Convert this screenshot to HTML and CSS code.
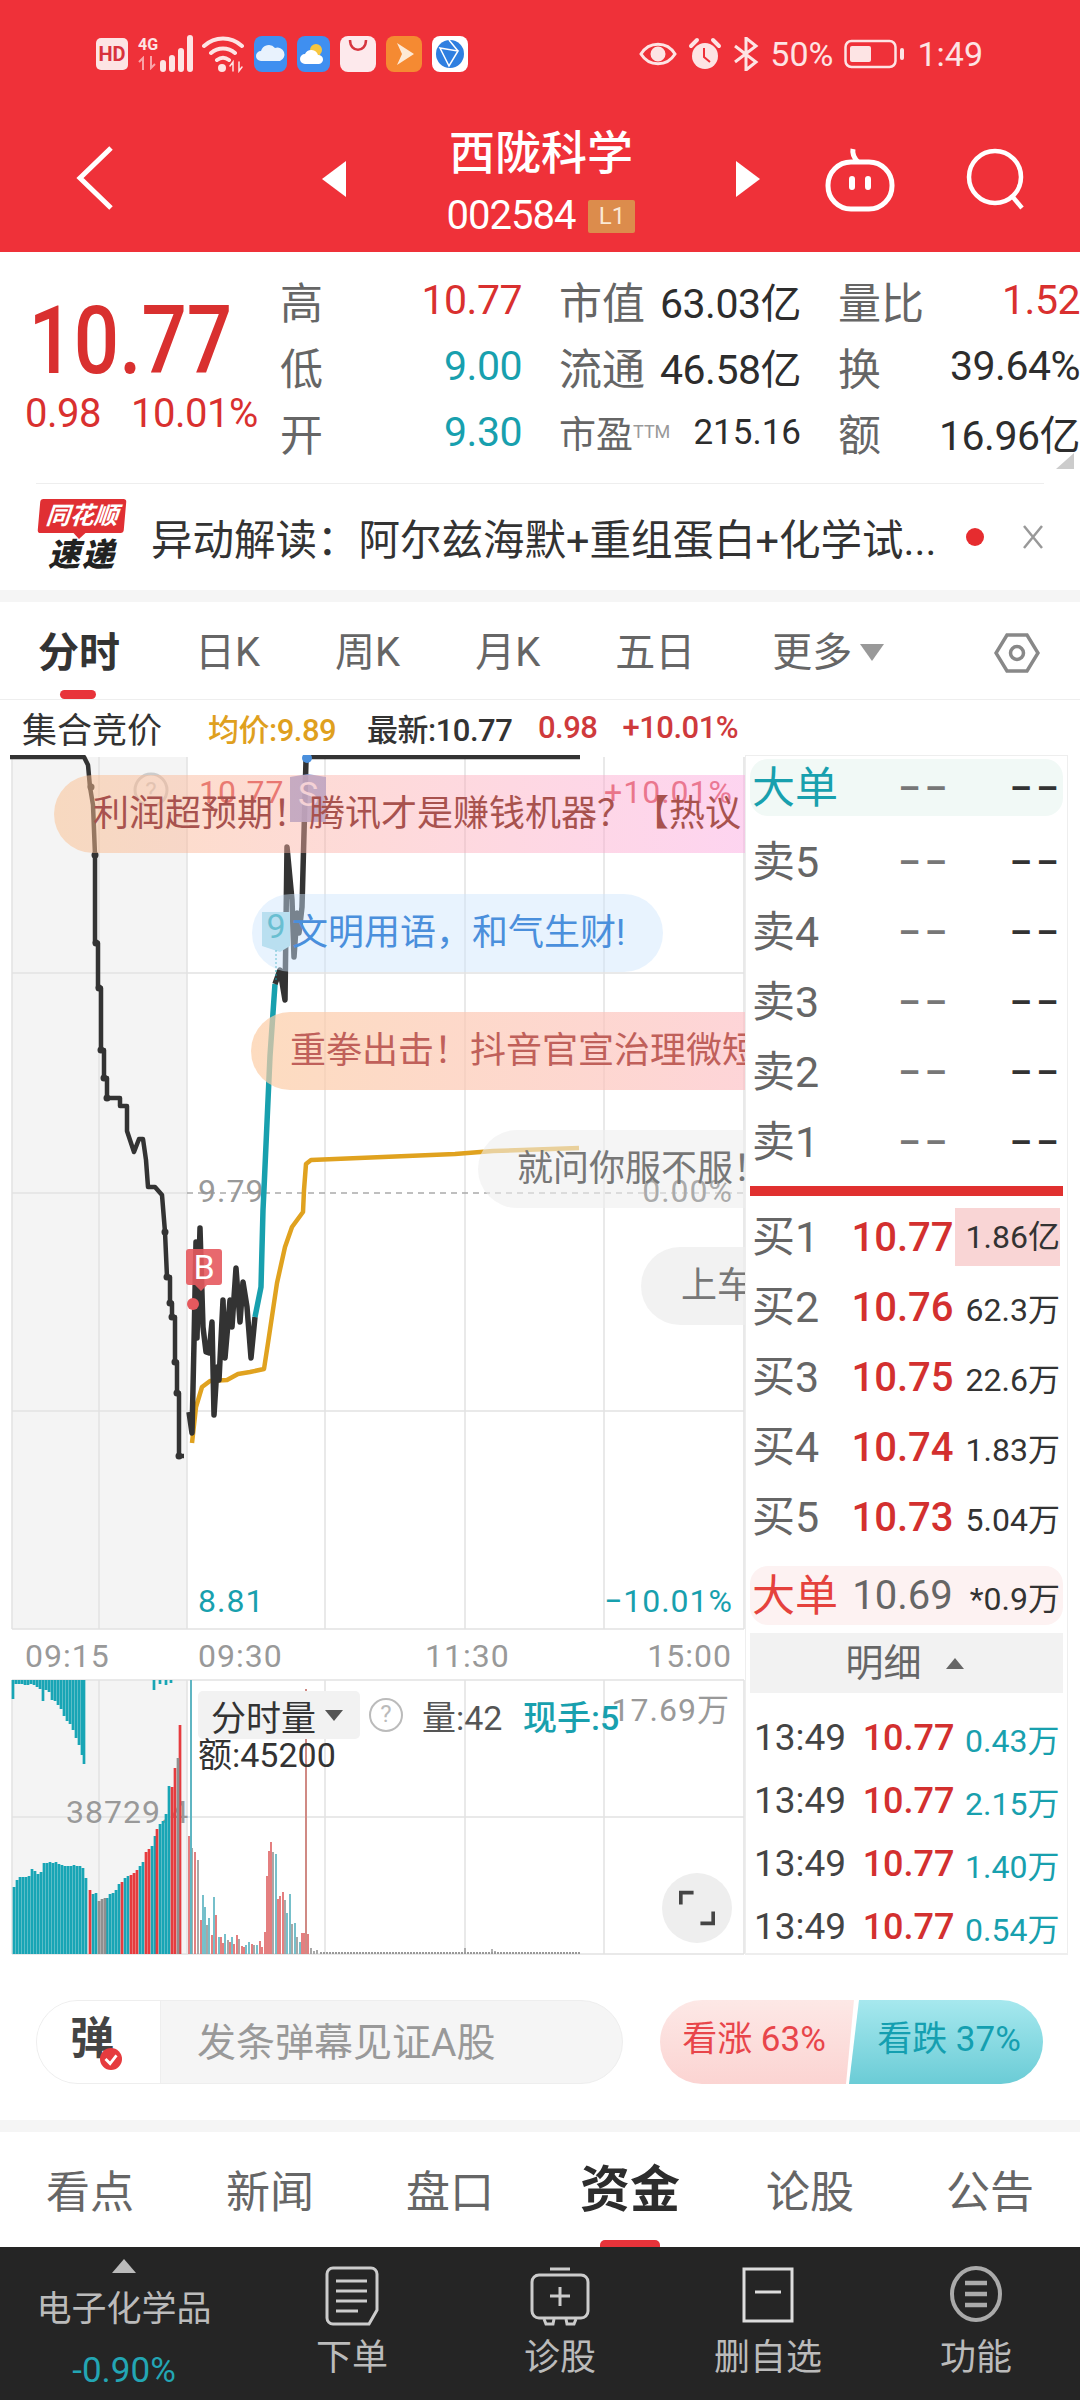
FILE: index.html
```html
<!DOCTYPE html>
<html lang="zh-CN">
<head>
    <meta charset="UTF-8">
    <meta name="viewport" content="width=device-width, initial-scale=1.0">
    <title>西陇科学</title>
    <link rel="stylesheet" href="styles.css">
</head>
<body>
    <header class="top">
        <div class="status">
            <div class="status-left">
                <span class="hd">HD</span>
                <span class="net">4G<svg class="net-arrows" width="20" height="14" viewBox="0 0 20 14" fill="none" stroke="#f9a3a8" stroke-width="2"><path d="M5 14V2L1 6M13 0v12l4-4"/></svg></span>
                <svg class="signal" width="38" height="38" viewBox="0 0 38 38"><path d="M3 34v-6M12 34v-11M21 34v-18M30 34V3" stroke="#fde4e4" stroke-width="6" stroke-linecap="round" fill="none"/></svg>
                <svg class="wifi" width="42" height="38" viewBox="0 0 42 38" fill="none" stroke="#fde4e4" stroke-width="4" stroke-linecap="round"><path d="M2 11C13 1 29 1 40 11M9 18c7-6 17-6 24 0M15 25c4-3 8-3 12 0"/><circle cx="20" cy="33" r="4" fill="#fde4e4" stroke="none"/><path d="M31 36v-9l-3 4M37 27v9l3-4" stroke-width="1.500"/></svg>
                <svg class="app" width="33" height="36" viewBox="0 0 33 36"><rect width="33" height="36" rx="8" fill="#3f8ff0"/><path d="M7 25a5 5 0 0 1 0-10 8 8 0 0 1 14-3 6.500 6.500 0 0 1 5 13z" fill="#e8f2fd"/></svg>
                <svg class="app" width="33" height="36" viewBox="0 0 33 36"><rect width="33" height="36" rx="8" fill="#3f8ff0"/><circle cx="19" cy="14" r="6" fill="#f7c640"/><path d="M8 28a5 5 0 0 1 0-10 7 7 0 0 1 13 1 4.500 4.500 0 0 1 1 9z" fill="#fff"/></svg>
                <svg class="app" width="36" height="36" viewBox="0 0 36 36"><rect width="36" height="36" rx="8" fill="#fde9ec"/><path d="M10 4c0 13 16 13 16 0" fill="none" stroke="#d6353f" stroke-width="2.500"/></svg>
                <svg class="app" width="36" height="36" viewBox="0 0 36 36"><rect width="36" height="36" rx="8" fill="#f58a32"/><path d="M11 7l17 11-17 11 5-11z" fill="#fde9d5"/></svg>
                <svg class="app" width="36" height="36" viewBox="0 0 36 36"><rect width="36" height="36" rx="8" fill="#fff"/><circle cx="18" cy="18" r="14" fill="#2f7fe0"/><path d="M8 12l18 3-9 15zM17 4l9 11" fill="none" stroke="#fff" stroke-width="1.500"/></svg>
            </div>
            <div class="status-right">
                <svg width="38" height="26" viewBox="0 0 38 26" fill="none" stroke="#fde4e4" stroke-width="3"><path d="M2 13C10 0 28 0 36 13 28 26 10 26 2 13z"/><circle cx="19" cy="13" r="6" fill="#fde4e4"/></svg>
                <svg width="34" height="34" viewBox="0 0 34 34"><circle cx="17" cy="19" r="13" fill="#fde4e4"/><path d="M16 11v9l6 5" fill="none" stroke="#ef3139" stroke-width="2"/><path d="M3 9l6-6M31 9l-6-6" stroke="#fde4e4" stroke-width="4" stroke-linecap="round"/></svg>
                <svg width="26" height="34" viewBox="0 0 26 34" fill="none" stroke="#fde4e4" stroke-width="3"><path d="M2 9l21 16-10 8V1l10 8L2 25"/></svg>
                <span class="pct">50%</span>
                <svg width="62" height="30" viewBox="0 0 62 30"><rect x="1.500" y="2" width="50" height="26" rx="6" fill="none" stroke="#fde4e4" stroke-width="2.500"/><rect x="6" y="7" width="21" height="16" rx="2" fill="#fde4e4"/><rect x="56" y="9" width="4" height="12" rx="2" fill="#fde4e4"/></svg>
                <span class="clock">1:49</span>
            </div>
        </div>
        <div class="nav">
            <svg class="nav-back" width="38" height="64" viewBox="0 0 38 64" fill="none" stroke="#fff" stroke-width="5"><path d="M35 2L4 32l31 30"/></svg>
            <span class="tri-left"></span>
            <div class="nav-title">
                <div class="stock-name">西陇科学</div>
                <div class="stock-code">002584<span class="level">L1</span></div>
            </div>
            <span class="tri-right"></span>
            <svg class="nav-robot" width="70" height="66" viewBox="0 0 70 66" fill="none" stroke="#fff" stroke-width="5"><path d="M33 16C29 12 27 8 28 3"/><rect x="3" y="16" width="64" height="47" rx="23"/><path d="M27 33v8M43 33v8" stroke-linecap="round" stroke-width="6"/></svg>
            <svg class="nav-search" width="62" height="62" viewBox="0 0 62 62" fill="none" stroke="#fff" stroke-width="4.500"><circle cx="29" cy="29" r="26"/><path d="M46 48l10 12"/></svg>
        </div>
    </header>

    <section class="quote">
        <div class="price-box">
            <div class="price">10.77</div>
            <div class="change"><span>0.98</span><span>10.01%</span></div>
        </div>
        <div class="stat-col col-a">
            <div class="stat"><span class="stat-name">高</span><span class="up">10.77</span></div>
            <div class="stat"><span class="stat-name">低</span><span class="down">9.00</span></div>
            <div class="stat"><span class="stat-name">开</span><span class="down">9.30</span></div>
        </div>
        <div class="stat-col col-b">
            <div class="stat"><span class="stat-name">市值</span><span class="dark">63.03亿</span></div>
            <div class="stat"><span class="stat-name">流通</span><span class="dark">46.58亿</span></div>
            <div class="stat"><span class="stat-name small">市盈<sup class="ttm">TTM</sup></span><span class="dark mid">215.16</span></div>
        </div>
        <div class="stat-col col-c">
            <div class="stat"><span class="stat-name">量比</span><span class="up">1.52</span></div>
            <div class="stat"><span class="stat-name">换</span><span class="dark">39.64%</span></div>
            <div class="stat"><span class="stat-name">额</span><span class="dark">16.96亿</span></div>
        </div>
        <span class="corner"></span>
    </section>

    <section class="news">
        <div class="news-logo">
            <span class="logo-top">同花顺</span>
            <span class="logo-bottom">速递</span>
        </div>
        <div class="news-text">异动解读：阿尔兹海默+重组蛋白+化学试...</div>
        <span class="news-dot"></span>
        <svg width="22" height="26" viewBox="0 0 22 26" stroke="#999" stroke-width="2.500"><path d="M2 2l18 22M20 2L2 24"/></svg>
    </section>

    <nav class="periods">
        <span class="period active">分时</span>
        <span class="period">日K</span>
        <span class="period">周K</span>
        <span class="period">月K</span>
        <span class="period">五日</span>
        <span class="period more">更多<i class="more-tri"></i></span>
        <svg class="hex" width="46" height="46" viewBox="0 0 46 46" fill="none" stroke="#888" stroke-width="3.500"><path d="M13 5h20l11 18-11 18H13L2 23z"/><circle cx="23" cy="23" r="6.500"/></svg>
    </nav>

    <div class="legend">
        <span class="legend-title">集合竞价</span>
        <span class="legend-avg">均价:9.89</span>
        <span class="legend-last">最新:10.77</span>
        <span class="legend-up">0.98</span>
        <span class="legend-up">+10.01%</span>
    </div>

    <div class="market">
        <div class="chart">
            <svg class="chart-svg" width="745" height="1200" viewBox="0 755 745 1200">
                <rect x="12" y="757" width="175" height="872" fill="#f4f4f4"/>
                <rect x="12" y="1680" width="175" height="274" fill="#f4f4f4"/>

                <g stroke="#e2e2e2" stroke-width="1.500" fill="none">
                    <path d="M12 757V1629M99 757V1629M187 757V1629M325 757V1629M465 757V1629M604 757V1629M744 757V1629"/>
                    <path d="M12 973H744M12 1193H187M12 1411H744M12 1629H744"/>
                    <path d="M12 1680V1954M99 1680V1954M187 1680V1954M325 1680V1954M465 1680V1954M604 1680V1954M744 1680V1954"/>
                    <path d="M12 1680H744M12 1817H744M12 1954H744"/>
                </g>
                <path d="M187 1193H744" stroke="#aaa" stroke-width="1.500" stroke-dasharray="6 5"/>

                <!-- labels under the danmaku -->
                <g class="chart-label">
                    <text x="199" y="803" fill="#d9484d">10.77</text>
                    <text x="733" y="803" fill="#d9484d" text-anchor="end">+10.01%</text>
                    <text x="198" y="1202" fill="#999">9.79</text>
                    <text x="733" y="1202" fill="#444" text-anchor="end">0.00%</text>
                    <text x="198" y="1612" fill="#18a0ae">8.81</text>
                    <text x="733" y="1612" fill="#18a0ae" text-anchor="end">−10.01%</text>
                    <text x="25" y="1667" fill="#999">09:15</text>
                    <text x="198" y="1667" fill="#999">09:30</text>
                    <text x="425" y="1667" fill="#999">11:30</text>
                    <text x="732" y="1667" fill="#999" text-anchor="end">15:00</text>
                    <text x="66" y="1823" fill="#999">38729.4</text>
                    <text x="730" y="1721" fill="#999" text-anchor="end">17.69万</text>
                </g>
                <circle cx="151" cy="790" r="16" fill="none" stroke="#ccc" stroke-width="3"/>
                <text class="qmark" x="151" y="799" text-anchor="middle" fill="#ccc">?</text>

                <!-- volume, pre-market hanging -->
                <path stroke="#18a5b5" stroke-width="2.700" fill="none" d="M13 1680v19M16 1680v4M19 1680v4M22 1680v4M25 1680v5M28 1680v5M31 1680v4M34 1680v5M37 1680v7M40 1680v9M43 1680v21M46 1680v10M49 1680v12M52 1680v20M55 1680v21M58 1680v25M61 1680v29M64 1680v36M67 1680v41M70 1680v44M73 1680v50M76 1680v58M79 1680v65M82 1680v75M84 1680v84M154 1680v10M160 1680v4M166 1680v5M171 1680v3"/>
                <!-- volume, pre-market -->
                <path stroke="#18a5b5" stroke-width="2.700" fill="none" d="M14 1954v-67M17 1954v-74M20 1954v-77M23 1954v-77M26 1954v-77M29 1954v-78M32 1954v-85M35 1954v-83M38 1954v-80M41 1954v-82M44 1954v-91M47 1954v-91M50 1954v-92M53 1954v-91M56 1954v-92M59 1954v-90M62 1954v-89M65 1954v-88M68 1954v-88M71 1954v-88M74 1954v-89M77 1954v-88M80 1954v-88M83 1954v-86M86 1954v-76M93 1954v-60M96 1954v-61M107 1954v-56M110 1954v-60M113 1954v-61M116 1954v-64M119 1954v-70M125 1954v-76M128 1954v-78M140 1954v-88M143 1954v-92M152 1954v-108M155 1954v-118M160 1954v-130M163 1954v-133M166 1954v-140M169 1954v-168"/>
                <path stroke="#e63b3e" stroke-width="2.700" fill="none" d="M90 1954v-64M122 1954v-72M131 1954v-79M134 1954v-81M137 1954v-84M146 1954v-102M149 1954v-105M157 1954v-125M172 1954v-167M175 1954v-186M180 1954v-229"/>
                <path stroke="#8f8f8f" stroke-width="2.700" fill="none" d="M99 1954v-53M102 1954v-55M105 1954v-56M178 1954v-196"/>
                <!-- volume, day session -->
                <path stroke="#e0696a" stroke-width="1.700" fill="none" d="M189 1954v-118M195 1954v-102M201 1954v-34M212 1954v-19M216 1954v-39M221 1954v-17M223 1954v-11M230 1954v-12M234 1954v-10M237 1954v-19M242 1954v-8M244 1954v-7M252 1954v-10M260 1954v-13M262 1954v-7M265 1954v-22M267 1954v-78M269 1954v-103M271 1954v-112M278 1954v-55M280 1954v-58M283 1954v-62M302 1954v-21M304 1954v-21M306 1954v-21M308 1954v-20"/>
                <path stroke="#999" stroke-width="1.700" fill="none" d="M192 1954v-106M198 1954v-94M207 1954v-29M228 1954v-14M239 1954v-15M254 1954v-9M273 1954v-102M285 1954v-54M292 1954v-30M297 1954v-17M311 1954v-6M314 1954v-3M317 1954v-4"/>
                <path stroke="#5fb5c2" stroke-width="1.700" fill="none" d="M203 1954v-59M205 1954v-47M209 1954v-36M214 1954v-57M219 1954v-17M225 1954v-20M232 1954v-17M246 1954v-9M249 1954v-12M257 1954v-9M276 1954v-100M287 1954v-41M290 1954v-60M295 1954v-31M300 1954v-12"/>
                <path d="M320 1953H580" stroke="#999" stroke-width="2" stroke-dasharray="2 1"/>
                <path d="M465 1954v-6M492 1954v-5M495 1954v-3" stroke="#999" stroke-width="1.500"/>
                <path d="M191 1680v274" stroke="#5fb5c2" stroke-width="2"/>
                <path d="M306 1689v265" stroke="#d08a84" stroke-width="2"/>

                <!-- price lines -->
                <path fill="none" stroke="#333" stroke-width="4.500" stroke-linejoin="round" d="M10 757H84L88 765 90 787 93 805 95 855V943H98V988H101V1050H104V1078H107V1098H120V1106H127V1131L131 1143 134 1152 139 1139H143L146 1160 148 1187H155L162 1195 165 1232 167 1277H170V1303H172V1317H175V1362H177V1393H179V1456H184"/>
                <g fill="#333">
                    <circle cx="91" cy="787" r="3.500"/><circle cx="95" cy="855" r="3.500"/><circle cx="96" cy="943" r="3.500"/><circle cx="99" cy="988" r="3.500"/><circle cx="101" cy="1050" r="3.500"/><circle cx="104" cy="1078" r="3.500"/><circle cx="107" cy="1098" r="3.500"/><circle cx="165" cy="1232" r="3.500"/><circle cx="167" cy="1277" r="3.500"/><circle cx="170" cy="1303" r="3.500"/><circle cx="172" cy="1317" r="3.500"/><circle cx="175" cy="1362" r="3.500"/><circle cx="177" cy="1393" r="3.500"/><circle cx="179" cy="1456" r="3.500"/>
                </g>
                <path fill="none" stroke="#e0a21f" stroke-width="4.500" stroke-linejoin="round" d="M192 1443L196 1407 202 1387 210 1381 227 1380 238 1374 250 1372 264 1369 268 1343 277 1283 285 1247 292 1227 303 1212 304 1190 306 1164 311 1160 383 1157 455 1154 493 1151 579 1148"/>
                <path fill="none" stroke="#333" stroke-width="5.500" stroke-linejoin="round" d="M189 1412L192 1433 194 1343 196 1242 197 1338 200 1228 203 1327 206 1352 209 1353 212 1322 214 1415 217 1367 219 1380 223 1300 225 1358 230 1300 232 1327 236 1268 240 1322 243 1282 247 1307 251 1358 255 1317"/>
                <path fill="none" stroke="#18a0ae" stroke-width="5.500" stroke-linejoin="round" d="M255 1317L261 1287 263 1210 264 1189 270 1056 275 984"/>
                <path fill="none" stroke="#333" stroke-width="5.500" stroke-linejoin="round" d="M275 984L280 970 285 1000 287 847 292 900 294 957 297 913 299 933 302 907 306 760"/>
                <path d="M306 757H580" stroke="#333" stroke-width="4.500"/>
                <circle cx="307" cy="758" r="5" fill="#4a8fdc"/>

                <!-- trade markers -->
                <path d="M186 1252a3 3 0 0 1 3-3h30a3 3 0 0 1 3 3v30a3 3 0 0 1-3 3h-12l-6 6-6-6h-6a3 3 0 0 1-3-3z" fill="#e5595e" fill-opacity=".9"/>
                <text class="marker-text" x="204" y="1279" text-anchor="middle" fill="#fff">B</text>
                <circle cx="193" cy="1304" r="6" fill="#e5595e"/>
                <path d="M290 777l18-3 18 3v45h-36z" fill="#8f9dd8" fill-opacity=".9"/>
                <text class="marker-text" x="308" y="806" text-anchor="middle" fill="#eef">S</text>
                <path d="M262 912h28v34l-10 6-18-6z" fill="#a9dbe6"/>
                <text class="marker-text" x="276" y="938" text-anchor="middle" fill="#18a0ae">9</text>
                <path d="M276 950v30" stroke="#18a0ae" stroke-dasharray="2 2"/>
            </svg>

            <!-- danmaku -->
            <div class="danmu danmu-a">利润超预期！腾讯才是赚钱机器？【热议</div>
            <div class="danmu danmu-b">文明用语，和气生财!</div>
            <div class="danmu danmu-c">重拳出击！抖音官宣治理微短</div>
            <div class="danmu danmu-d">就问你服不服！</div>
            <div class="danmu danmu-e">上车</div>

            <div class="vol-bar">
                <span class="vol-select">分时量<i class="vol-tri"></i></span>
                <span class="vol-help">?</span>
                <span class="vol-amount">量:42</span>
                <span class="vol-hand">现手:5</span>
            </div>
            <div class="vol-money">额:45200</div>
            <div class="expand">
                <svg width="42" height="42" viewBox="0 0 42 42" fill="none" stroke="#444" stroke-width="4.500"><path d="M2 17V3h15M40 25v14H25"/></svg>
            </div>
        </div>

        <aside class="orders">
            <div class="big-row sell-big">
                <span class="order-name teal">大单</span>
                <span class="dash grey">––</span>
                <span class="dash">––</span>
            </div>
            <div class="order-row"><span class="order-name">卖5</span><span class="dash grey">––</span><span class="dash">––</span></div>
            <div class="order-row"><span class="order-name">卖4</span><span class="dash grey">––</span><span class="dash">––</span></div>
            <div class="order-row"><span class="order-name">卖3</span><span class="dash grey">––</span><span class="dash">––</span></div>
            <div class="order-row"><span class="order-name">卖2</span><span class="dash grey">––</span><span class="dash">––</span></div>
            <div class="order-row"><span class="order-name">卖1</span><span class="dash grey">––</span><span class="dash">––</span></div>
            <div class="order-split"></div>
            <div class="order-row"><span class="order-name">买1</span><span class="order-price">10.77</span><span class="order-vol first">1.86亿</span></div>
            <div class="order-row"><span class="order-name">买2</span><span class="order-price">10.76</span><span class="order-vol">62.3万</span></div>
            <div class="order-row"><span class="order-name">买3</span><span class="order-price">10.75</span><span class="order-vol">22.6万</span></div>
            <div class="order-row"><span class="order-name">买4</span><span class="order-price">10.74</span><span class="order-vol">1.83万</span></div>
            <div class="order-row"><span class="order-name">买5</span><span class="order-price">10.73</span><span class="order-vol">5.04万</span></div>
            <div class="big-row buy-big">
                <span class="order-name red">大单</span>
                <span class="order-price grey">10.69</span>
                <span class="order-vol">*0.9万</span>
            </div>
            <div class="detail-head">明细<i class="detail-tri"></i></div>
            <div class="tick"><span class="tick-time">13:49</span><span class="tick-price">10.77</span><span class="tick-vol">0.43万</span></div>
            <div class="tick"><span class="tick-time">13:49</span><span class="tick-price">10.77</span><span class="tick-vol">2.15万</span></div>
            <div class="tick"><span class="tick-time">13:49</span><span class="tick-price">10.77</span><span class="tick-vol">1.40万</span></div>
            <div class="tick"><span class="tick-time">13:49</span><span class="tick-price">10.77</span><span class="tick-vol">0.54万</span></div>
        </aside>
    </div>

    <div class="comment-bar">
        <div class="comment-input">
            <span class="comment-mark">弹<svg class="comment-check" width="24" height="24" viewBox="0 0 24 24"><circle cx="12" cy="12" r="12" fill="#e63b3e"/><path d="M6 12l5 5 7-9" fill="none" stroke="#fff" stroke-width="3"/></svg></span>
            <span class="comment-hint">发条弹幕见证A股</span>
        </div>
        <div class="vote">
            <span class="vote-up">看涨 63%</span>
            <span class="vote-down">看跌 37%</span>
        </div>
    </div>

    <nav class="sections">
        <span class="section">看点</span>
        <span class="section">新闻</span>
        <span class="section">盘口</span>
        <span class="section active">资金</span>
        <span class="section">论股</span>
        <span class="section">公告</span>
    </nav>

    <footer class="toolbar">
        <div class="sector">
            <i class="sector-tri"></i>
            <div class="sector-name">电子化学品</div>
            <div class="sector-pct">-0.90%</div>
        </div>
        <div class="tool">
            <svg width="54" height="60" viewBox="0 0 54 60" fill="none" stroke="#ccc" stroke-width="3"><path d="M8 2h38a6 6 0 0 1 6 6v36l-8 14H8a6 6 0 0 1-6-6V8a6 6 0 0 1 6-6z"/><path d="M11 15h31M11 25h31M11 35h31M11 45h22"/></svg>
            <span class="tool-label">下单</span>
        </div>
        <div class="tool">
            <svg width="60" height="60" viewBox="0 0 60 60" fill="none" stroke="#ccc" stroke-width="3"><rect x="2" y="9" width="56" height="43" rx="7"/><path d="M20 3h20M14 53l2 5h7l1-5M36 53l1 5h7l2-5M30 21v19M20 30h20"/></svg>
            <span class="tool-label">诊股</span>
        </div>
        <div class="tool">
            <svg width="54" height="60" viewBox="0 0 54 60" fill="none" stroke="#ddd" stroke-width="3"><rect x="3" y="3" width="48" height="52"/><path d="M14 26h26"/></svg>
            <span class="tool-label">删自选</span>
        </div>
        <div class="tool">
            <svg width="56" height="60" viewBox="0 0 56 60" fill="none" stroke="#aaa"><ellipse cx="28" cy="28" rx="24" ry="26" stroke-width="4"/><path d="M17 17h22M17 28h22M17 39h22" stroke-width="4.500"/></svg>
            <span class="tool-label">功能</span>
        </div>
    </footer>
</body>
</html>
```

FILE: styles.css
```css
* {
    box-sizing: border-box;
}
body {
    margin: 0;
    width: 1080px;
    height: 2400px;
    overflow: hidden;
    background: #fff;
    color: #333;
    font-family: Roboto, "Noto Sans CJK SC", sans-serif;
}
i {
    display: block;
}

/* red header */
.top {
    height: 252px;
    background: #ef3139;
    color: #fff;
}
.status {
    height: 110px;
    padding: 36px 97px 0 96px;
    display: flex;
    justify-content: space-between;
    align-items: flex-start;
}
.status-left,
.status-right {
    display: flex;
    align-items: center;
    height: 36px;
}
.status-left {
    gap: 10px;
}
.status-right {
    gap: 11px;
    color: #fde4e4;
    font-size: 34px;
}
.hd {
    width: 32px;
    height: 32px;
    border-radius: 5px;
    background: #fde4e4;
    color: #d8323c;
    font-size: 20px;
    font-weight: 700;
    line-height: 32px;
    text-align: center;
}
.net {
    display: flex;
    flex-direction: column;
    align-self: flex-start;
    width: 20px;
    font-size: 16px;
    font-weight: 700;
    line-height: 18px;
    color: #fde4e4;
}
.net-arrows {
    display: block;
    margin-top: 2px;
}
.signal {
    margin-left: -8px;
}
.wifi {
    margin-left: -6px;
}
.nav {
    display: flex;
    align-items: center;
    height: 142px;
    padding: 0 0 0 76px;
}
.nav-back {
    margin-right: 208px;
    margin-top: -7px;
}
.tri-left,
.tri-right {
    width: 0;
    height: 0;
    margin-top: -4px;
    border-top: 18px solid transparent;
    border-bottom: 18px solid transparent;
}
.tri-left {
    border-right: 24px solid #fff;
}
.tri-right {
    border-left: 24px solid #fff;
}
.nav-title {
    align-self: flex-start;
    width: 390px;
    margin-top: 12px;
    text-align: center;
}
.stock-name {
    font-size: 46px;
    font-weight: 500;
    line-height: 62px;
}
.stock-code {
    margin-top: 8px;
    font-size: 40px;
    letter-spacing: -1px;
    line-height: 48px;
    display: flex;
    justify-content: center;
    align-items: center;
}
.level {
    width: 47px;
    height: 33px;
    margin-left: 13px;
    background: #dc8c4c;
    color: #fbe9d6;
    font-size: 24px;
    letter-spacing: 0;
    line-height: 33px;
    text-align: center;
    border-radius: 2px;
}
.nav-robot {
    margin-left: 65px;
    margin-top: -4px;
}
.nav-search {
    margin-left: 71px;
    margin-top: -4px;
}

/* quote */
.quote {
    position: relative;
    display: flex;
    height: 231px;
    padding-top: 15px;
}
.price-box {
    width: 280px;
    padding: 28px 0 0 25px;
    color: #d9302f;
}
.price {
    width: 210px;
    padding-left: 4px;
    font-size: 94px;
    font-weight: 500;
    line-height: 92px;
    transform: scaleX(.85);
    transform-origin: left;
}
.change {
    display: flex;
    gap: 30px;
    font-size: 40px;
    letter-spacing: -.5px;
    line-height: 44px;
    margin-top: 5px;
    white-space: nowrap;
}
.stat-col {
    width: 241px;
}
.col-a {
    margin-left: 1px;
}
.col-b {
    margin: 0 38px;
}
.stat {
    display: flex;
    justify-content: space-between;
    align-items: center;
    height: 66px;
    font-size: 41px;
    letter-spacing: -.5px;
    white-space: nowrap;
}
.stat-name {
    font-size: 43px;
    letter-spacing: 0;
    color: #666;
    margin-left: -1px;
}
.stat-name.small {
    font-size: 37px;
}
.ttm {
    font-size: 18px;
    color: #999;
    vertical-align: 10px;
    line-height: 0;
}
.up {
    color: #d9302f;
}
.down {
    color: #18a0ae;
}
.dark {
    color: #2d2d2d;
}
.mid {
    font-size: 35px;
    font-weight: 400;
    letter-spacing: 0;
}
.corner {
    position: absolute;
    right: 6px;
    bottom: 14px;
    border-left: 18px solid transparent;
    border-bottom: 16px solid #ccc;
}

/* news line */
.news {
    display: flex;
    align-items: center;
    height: 107px;
    margin: 0 36px;
    border-top: 1.500px solid #eee;
    background: #fff;
}
.news-logo {
    width: 88px;
    margin-left: 2px;
    display: flex;
    flex-direction: column;
    align-items: center;
}
.logo-top {
    position: relative;
    width: 86px;
    height: 34px;
    background: #e02f33;
    color: #fff;
    font-size: 24px;
    font-style: italic;
    font-weight: 700;
    line-height: 34px;
    text-align: center;
    border-radius: 3px;
    transform: skewX(-5deg);
}
.logo-top::after {
    content: "";
    position: absolute;
    left: 36px;
    top: 34px;
    border-left: 6px solid transparent;
    border-right: 6px solid transparent;
    border-top: 6px solid #e02f33;
}
.logo-bottom {
    margin-top: 2px;
    font-size: 32px;
    font-weight: 900;
    font-style: italic;
    line-height: 40px;
    letter-spacing: 2px;
    color: #222;
}
.news-text {
    flex: 1;
    margin-left: 25px;
    font-size: 41.500px;
    color: #333;
    white-space: nowrap;
}
.news-dot {
    width: 18px;
    height: 18px;
    margin-right: 38px;
    border-radius: 50%;
    background: #e62c2f;
}

/* period tabs */
.periods {
    display: flex;
    align-items: center;
    gap: 75px;
    height: 110px;
    padding: 4px 0 0 38px;
    border-top: 12px solid #f5f5f5;
    border-bottom: 1.500px solid #eee;
    font-size: 40px;
    color: #666;
}
.period {
    position: relative;
    line-height: 50px;
}
.period.active {
    color: #333;
    font-size: 41px;
    font-weight: 700;
}
.period.active::after {
    content: "";
    position: absolute;
    left: 22px;
    bottom: -21px;
    width: 36px;
    height: 9px;
    border-radius: 5px;
    background: #e8333a;
}
.period.more {
    display: flex;
    align-items: center;
    margin-left: 2px;
    gap: 8px;
}
.more-tri {
    border-left: 12px solid transparent;
    border-right: 12px solid transparent;
    border-top: 17px solid #999;
}
.hex {
    margin-left: 35px;
}

/* legend above chart */
.legend {
    display: flex;
    align-items: center;
    height: 55px;
    padding-left: 22px;
    font-size: 31px;
    letter-spacing: -.5px;
    white-space: nowrap;
}
.legend-title {
    width: 186px;
    font-size: 35px;
    letter-spacing: 0;
    color: #333;
}
.legend-avg {
    width: 159px;
    color: #dfa01e;
    font-weight: 500;
}
.legend-last {
    width: 171px;
    color: #333;
    font-weight: 500;
}
.legend-up {
    color: #cf3a3c;
    font-weight: 500;
    margin-right: 25px;
}

/* chart + order book */
.market {
    display: flex;
    height: 1200px;
}
.chart {
    position: relative;
    width: 745px;
    height: 1200px;
    overflow: hidden;
    flex: none;
}
.chart-svg {
    display: block;
}
.chart-label {
    font-size: 32px;
    letter-spacing: 1px;
}
.qmark {
    font-size: 24px;
}
.marker-text {
    font-size: 34px;
}
.danmu {
    position: absolute;
    height: 78px;
    border-radius: 39px 0 0 39px;
    font-size: 36px;
    line-height: 78px;
    white-space: nowrap;
    overflow: hidden;
}
.danmu-a {
    top: 20px;
    left: 54px;
    right: 0;
    padding-left: 39px;
    background: linear-gradient(90deg, rgba(250, 190, 140, .5), rgba(253, 165, 175, .42) 55%, rgba(252, 170, 225, .5));
    color: #a8524e;
}
.danmu-b {
    top: 139px;
    left: 252px;
    width: 411px;
    padding-left: 40px;
    border-radius: 39px;
    background: rgba(205, 228, 252, .45);
    color: #4a8fdc;
}
.danmu-c {
    top: 257px;
    left: 251px;
    right: 0;
    padding-left: 39px;
    background: linear-gradient(90deg, rgba(252, 205, 165, .7), rgba(253, 190, 195, .65));
    color: #c0605a;
}
.danmu-d {
    top: 375px;
    left: 478px;
    right: 0;
    padding-left: 39px;
    background: rgba(238, 238, 238, .6);
    color: #777;
}
.danmu-e {
    top: 492px;
    left: 641px;
    right: 0;
    padding-left: 40px;
    background: rgba(238, 238, 238, .75);
    color: #777;
}
.vol-bar {
    position: absolute;
    top: 936px;
    left: 198px;
    display: flex;
    align-items: center;
    height: 48px;
    font-size: 34px;
    white-space: nowrap;
}
.vol-select {
    display: flex;
    align-items: center;
    width: 162px;
    height: 48px;
    padding-left: 13px;
    border-radius: 5px;
    background: #f2f2f2;
    color: #333;
    font-size: 35px;
}
.vol-tri {
    margin-left: 9px;
    border-left: 9px solid transparent;
    border-right: 9px solid transparent;
    border-top: 11px solid #555;
}
.vol-help {
    width: 34px;
    height: 34px;
    margin: 0 19px 0 9px;
    border: 2.500px solid #bbb;
    border-radius: 50%;
    color: #bbb;
    font-size: 24px;
    line-height: 29px;
    text-align: center;
}
.vol-amount {
    width: 101px;
    color: #555;
}
.vol-hand {
    color: #18a0ae;
    font-weight: 500;
}
.vol-money {
    position: absolute;
    top: 980px;
    left: 198px;
    font-size: 34px;
    line-height: 40px;
    color: #333;
}
.expand {
    position: absolute;
    top: 1118px;
    left: 662px;
    width: 70px;
    height: 70px;
    display: flex;
    align-items: center;
    justify-content: center;
    border-radius: 50%;
    background: #eee;
}
.expand svg {
    width: 36px;
    height: 36px;
}

/* order book */
.orders {
    width: 323px;
    height: 1200px;
    padding: 3px 4px 0;
    border: 1.500px solid #eee;
    border-bottom-width: 2px;
    font-size: 32px;
}
.order-row,
.big-row {
    display: flex;
    align-items: center;
    justify-content: space-between;
    padding: 0 3px 0 2px;
    height: 70px;
    white-space: nowrap;
}
.big-row {
    height: 57px;
    border-radius: 18px;
}
.sell-big {
    background: #f1f9f6;
    margin-bottom: 11px;
}
.buy-big {
    height: 59px;
    margin: 14px 0 8px;
    background: #fdf2f2;
}
.order-name {
    width: 100px;
    padding-bottom: 8px;
    font-size: 43px;
    color: #666;
}
.teal {
    color: #18a0ae;
}
.red {
    color: #e5423d;
}
.dash {
    width: 50px;
    font-size: 34px;
    font-weight: 700;
    letter-spacing: 5px;
    color: #333;
    line-height: 1;
}
.dash.grey {
    margin-left: -15px;
    color: #777;
}
.order-price {
    font-size: 40px;
    font-weight: 500;
    color: #d3302f;
    margin-left: -2px;
}
.order-price.grey {
    font-weight: 400;
    color: #666;
}
.order-vol {
    width: 105px;
    text-align: right;
    font-size: 32px;
    color: #333;
}
.order-vol.first {
    background: #f9d5d5;
    height: 58px;
    line-height: 58px;
}
.order-split {
    height: 10px;
    margin: 9px 0 6px;
    background: #e0302f;
}
.detail-head {
    position: relative;
    height: 60px;
    margin-bottom: 13px;
    padding-right: 46px;
    background: #f2f2f2;
    color: #666;
    font-size: 38px;
    line-height: 60px;
    text-align: center;
}
.detail-tri {
    position: absolute;
    right: 99px;
    top: 25px;
    border-left: 9px solid transparent;
    border-right: 9px solid transparent;
    border-bottom: 11px solid #666;
}
.tick {
    display: flex;
    align-items: center;
    justify-content: space-between;
    height: 63px;
    padding: 0 6px 0 4px;
    white-space: nowrap;
}
.tick-time {
    font-size: 37px;
    color: #444;
}
.tick-price {
    font-size: 36px;
    font-weight: 500;
    color: #d3302f;
    margin-left: 6px;
}
.tick-vol {
    width: 92px;
    font-size: 32px;
    color: #18a0ae;
    text-align: right;
}

/* comment + vote */
.comment-bar {
    display: flex;
    justify-content: space-between;
    height: 177px;
    padding: 45px 37px 0 36px;
    border-bottom: 12px solid #f5f5f5;
}
.comment-input {
    display: flex;
    width: 587px;
    height: 84px;
    border: 1.500px solid #eee;
    border-radius: 42px;
    background: #f5f5f5;
    overflow: hidden;
}
.comment-mark {
    position: relative;
    width: 124px;
    background: #fff;
    border-right: 1.500px solid #eee;
    padding-left: 33px;
    font-size: 44px;
    font-weight: 700;
    line-height: 76px;
    color: #444;
}
.comment-check {
    position: absolute;
    left: 63px;
    top: 47px;
    width: 22px;
    height: 22px;
}
.comment-hint {
    padding-left: 36px;
    font-size: 39px;
    line-height: 84px;
    color: #999;
}
.vote {
    display: flex;
    width: 383px;
    height: 84px;
    font-size: 35px;
    line-height: 80px;
    text-align: center;
}
.vote-up {
    width: 194px;
    padding-right: 6px;
    border-radius: 42px 0 0 42px;
    background: linear-gradient(#fde8e6, #fbd4d2);
    color: #e8454a;
    clip-path: polygon(0 0, 100% 0, calc(100% - 8px) 100%, 0 100%);
}
.vote-down {
    width: 194px;
    margin-left: -5px;
    padding-left: 6px;
    border-radius: 0 42px 42px 0;
    background: linear-gradient(#a6e8ee, #6bccd6);
    color: #149fb0;
    clip-path: polygon(10px 0, 100% 0, 100% 100%, 0 100%);
}

/* section tabs */
.sections {
    display: flex;
    height: 115px;
    font-size: 44px;
    color: #666;
}
.section {
    position: relative;
    width: 180px;
    line-height: 122px;
    text-align: center;
}
.section.active {
    color: #2d2d2d;
    font-size: 50px;
    font-weight: 700;
    line-height: 116px;
}
.section.active::after {
    content: "";
    position: absolute;
    left: 60px;
    bottom: 0;
    width: 60px;
    height: 7px;
    border-radius: 5px 5px 0 0;
    background: #e8333a;
}

/* dark toolbar */
.toolbar {
    display: flex;
    height: 153px;
    background: #252525;
    color: #bbb;
}
.sector {
    position: relative;
    width: 248px;
    text-align: center;
}
.sector-tri {
    width: 0;
    margin: 12px auto 0;
    border-left: 12px solid transparent;
    border-right: 12px solid transparent;
    border-bottom: 14px solid #bbb;
}
.sector-name {
    margin-top: 14px;
    font-size: 35px;
    line-height: 46px;
}
.sector-pct {
    margin-top: 16px;
    font-size: 35px;
    line-height: 44px;
    color: #23a6b4;
}
.tool {
    display: flex;
    flex-direction: column;
    align-items: center;
    width: 208px;
    padding-top: 19px;
}
.tool-label {
    margin-top: 8px;
    font-size: 36px;
    line-height: 48px;
    color: #bbb;
}
```
